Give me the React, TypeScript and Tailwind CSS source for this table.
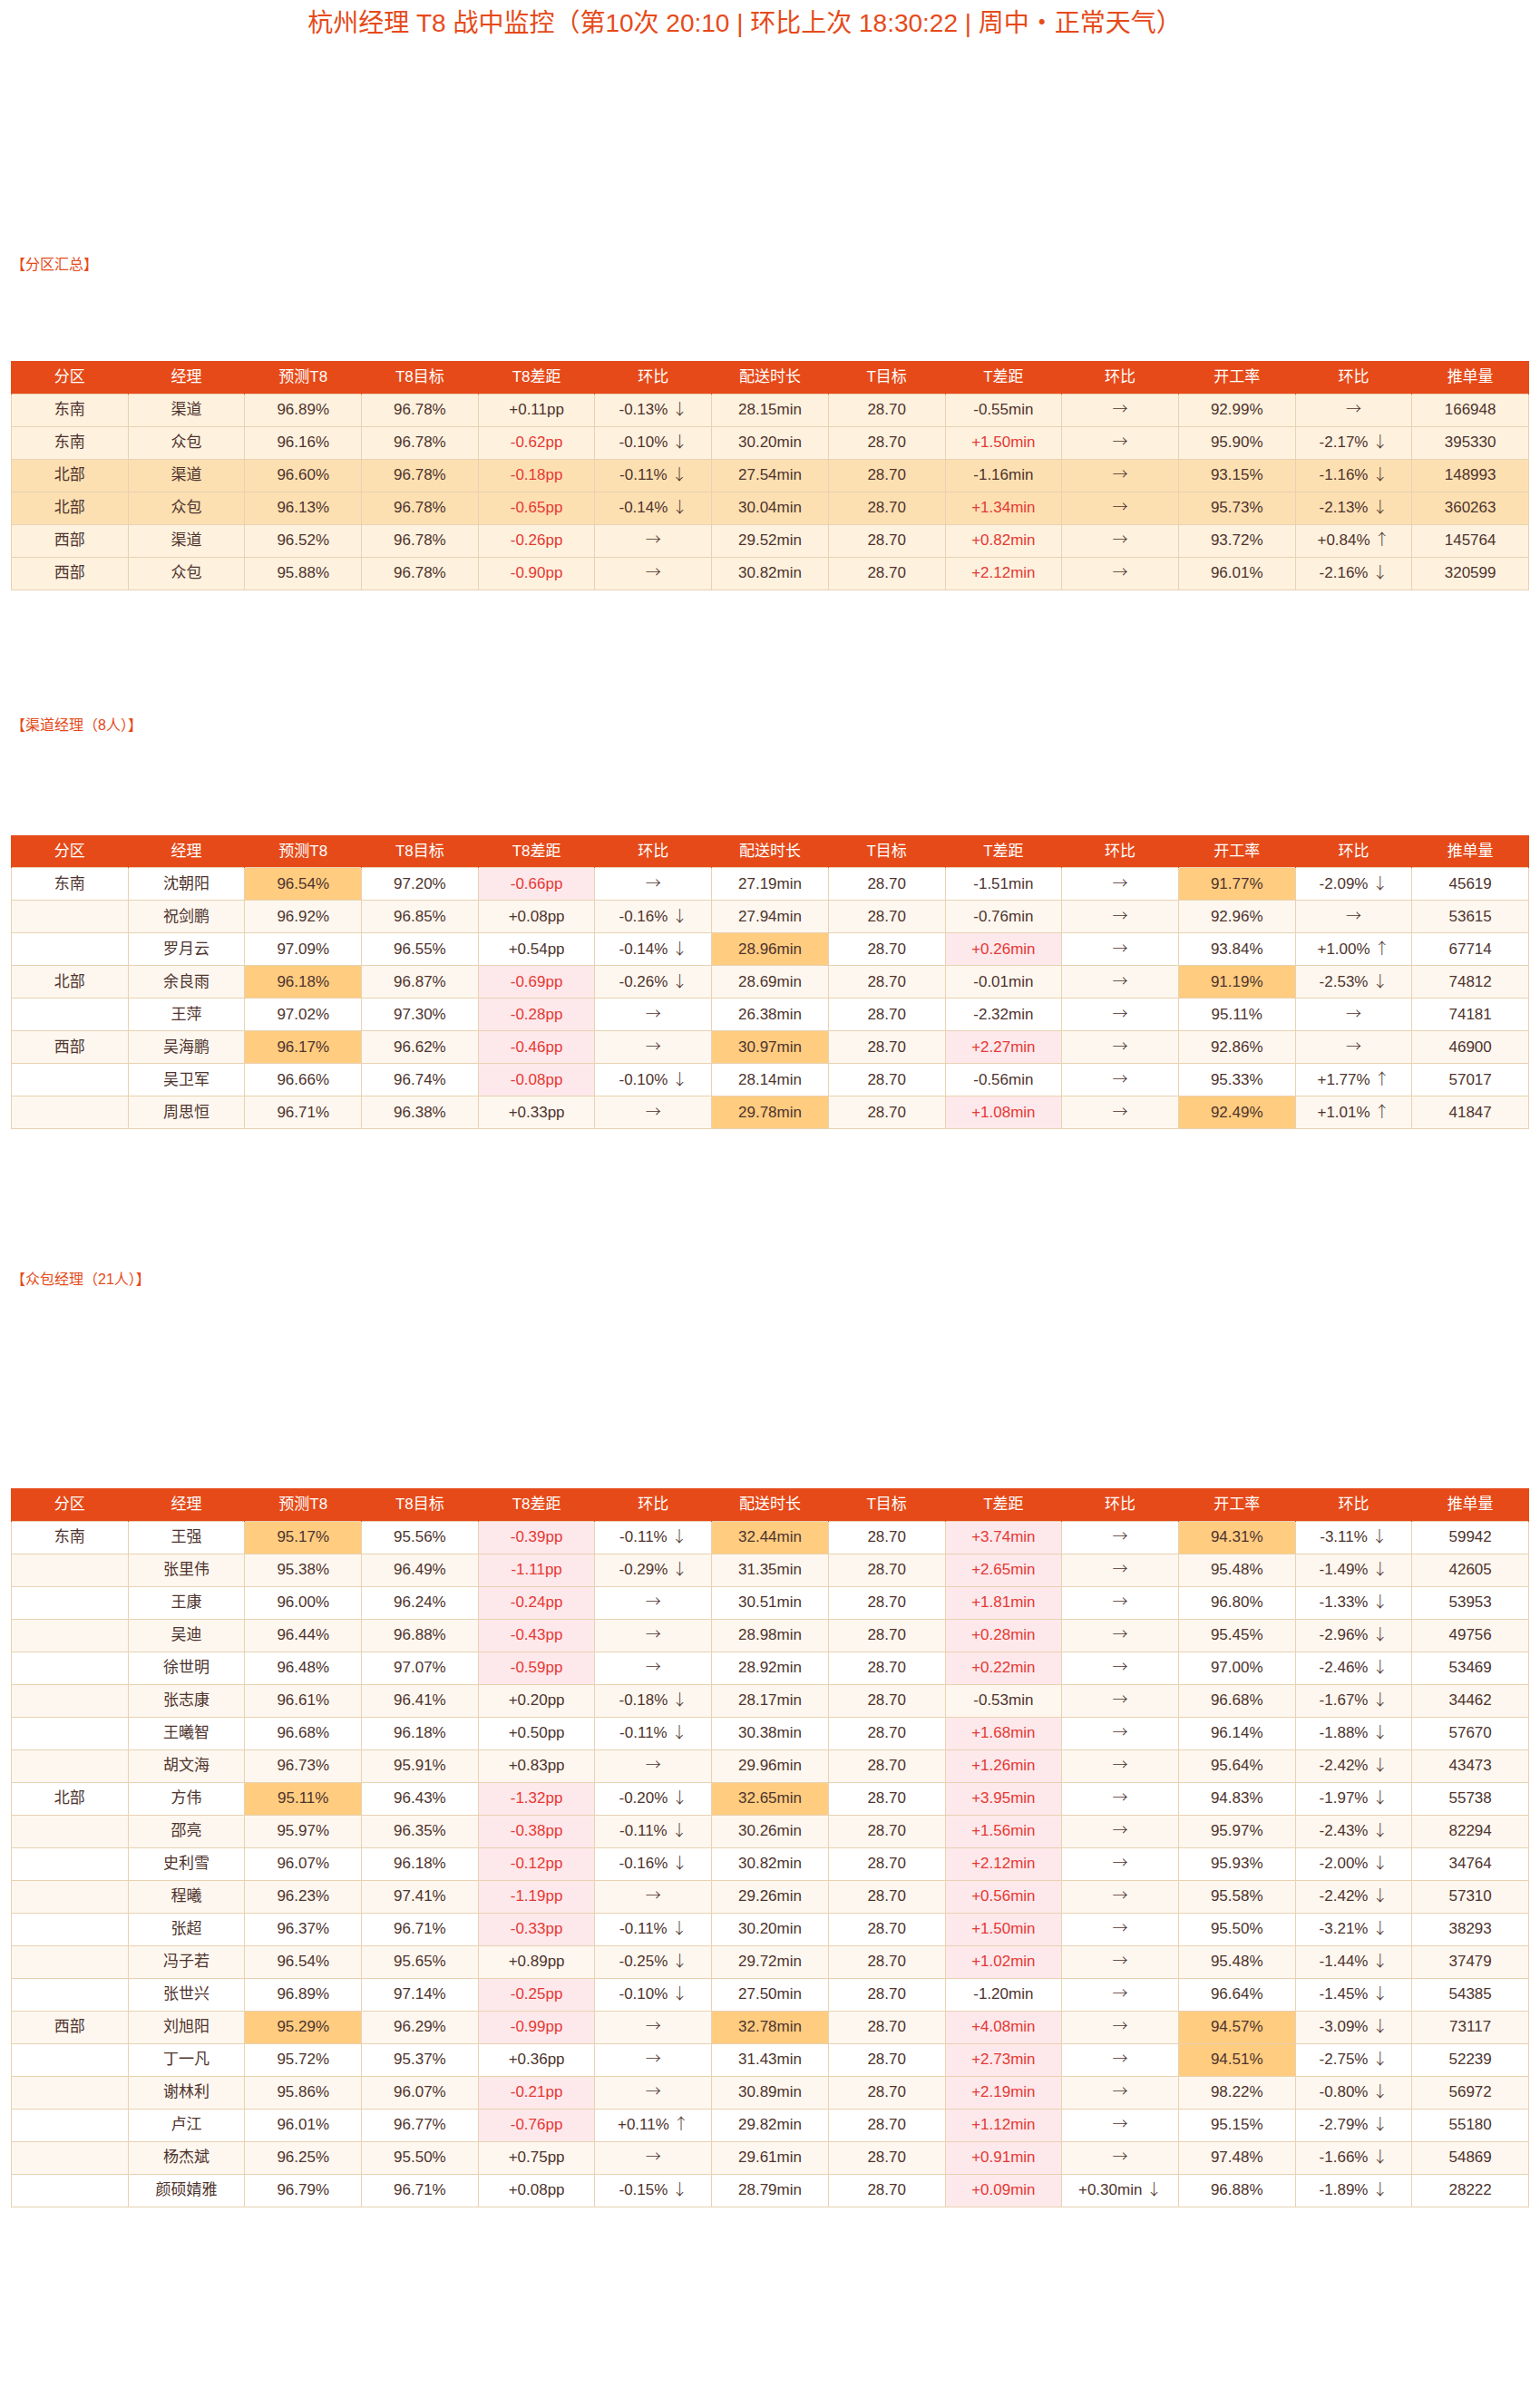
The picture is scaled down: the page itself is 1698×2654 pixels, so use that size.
import React from 'react';

const HEAD = ['分区', '经理', '预测T8', 'T8目标', 'T8差距', '环比', '配送时长', 'T目标', 'T差距', '环比', '开工率', '环比', '推单量'];

type Row = { cells: string[]; hl?: number[] };

const summary: Row[] = [
  { cells: ['东南', '渠道', '96.89%', '96.78%', '+0.11pp', '-0.13% ↓', '28.15min', '28.70', '-0.55min', '→', '92.99%', '→', '166948'] },
  { cells: ['东南', '众包', '96.16%', '96.78%', '-0.62pp', '-0.10% ↓', '30.20min', '28.70', '+1.50min', '→', '95.90%', '-2.17% ↓', '395330'] },
  { cells: ['北部', '渠道', '96.60%', '96.78%', '-0.18pp', '-0.11% ↓', '27.54min', '28.70', '-1.16min', '→', '93.15%', '-1.16% ↓', '148993'] },
  { cells: ['北部', '众包', '96.13%', '96.78%', '-0.65pp', '-0.14% ↓', '30.04min', '28.70', '+1.34min', '→', '95.73%', '-2.13% ↓', '360263'] },
  { cells: ['西部', '渠道', '96.52%', '96.78%', '-0.26pp', '→', '29.52min', '28.70', '+0.82min', '→', '93.72%', '+0.84% ↑', '145764'] },
  { cells: ['西部', '众包', '95.88%', '96.78%', '-0.90pp', '→', '30.82min', '28.70', '+2.12min', '→', '96.01%', '-2.16% ↓', '320599'] },
];

const channel: Row[] = [
  { cells: ['东南', '沈朝阳', '96.54%', '97.20%', '-0.66pp', '→', '27.19min', '28.70', '-1.51min', '→', '91.77%', '-2.09% ↓', '45619'], hl: [2, 10] },
  { cells: ['', '祝剑鹏', '96.92%', '96.85%', '+0.08pp', '-0.16% ↓', '27.94min', '28.70', '-0.76min', '→', '92.96%', '→', '53615'] },
  { cells: ['', '罗月云', '97.09%', '96.55%', '+0.54pp', '-0.14% ↓', '28.96min', '28.70', '+0.26min', '→', '93.84%', '+1.00% ↑', '67714'], hl: [6] },
  { cells: ['北部', '余良雨', '96.18%', '96.87%', '-0.69pp', '-0.26% ↓', '28.69min', '28.70', '-0.01min', '→', '91.19%', '-2.53% ↓', '74812'], hl: [2, 10] },
  { cells: ['', '王萍', '97.02%', '97.30%', '-0.28pp', '→', '26.38min', '28.70', '-2.32min', '→', '95.11%', '→', '74181'] },
  { cells: ['西部', '吴海鹏', '96.17%', '96.62%', '-0.46pp', '→', '30.97min', '28.70', '+2.27min', '→', '92.86%', '→', '46900'], hl: [2, 6] },
  { cells: ['', '吴卫军', '96.66%', '96.74%', '-0.08pp', '-0.10% ↓', '28.14min', '28.70', '-0.56min', '→', '95.33%', '+1.77% ↑', '57017'] },
  { cells: ['', '周思恒', '96.71%', '96.38%', '+0.33pp', '→', '29.78min', '28.70', '+1.08min', '→', '92.49%', '+1.01% ↑', '41847'], hl: [6, 10] },
];

const crowd: Row[] = [
  { cells: ['东南', '王强', '95.17%', '95.56%', '-0.39pp', '-0.11% ↓', '32.44min', '28.70', '+3.74min', '→', '94.31%', '-3.11% ↓', '59942'], hl: [2, 6, 10] },
  { cells: ['', '张里伟', '95.38%', '96.49%', '-1.11pp', '-0.29% ↓', '31.35min', '28.70', '+2.65min', '→', '95.48%', '-1.49% ↓', '42605'] },
  { cells: ['', '王康', '96.00%', '96.24%', '-0.24pp', '→', '30.51min', '28.70', '+1.81min', '→', '96.80%', '-1.33% ↓', '53953'] },
  { cells: ['', '吴迪', '96.44%', '96.88%', '-0.43pp', '→', '28.98min', '28.70', '+0.28min', '→', '95.45%', '-2.96% ↓', '49756'] },
  { cells: ['', '徐世明', '96.48%', '97.07%', '-0.59pp', '→', '28.92min', '28.70', '+0.22min', '→', '97.00%', '-2.46% ↓', '53469'] },
  { cells: ['', '张志康', '96.61%', '96.41%', '+0.20pp', '-0.18% ↓', '28.17min', '28.70', '-0.53min', '→', '96.68%', '-1.67% ↓', '34462'] },
  { cells: ['', '王曦智', '96.68%', '96.18%', '+0.50pp', '-0.11% ↓', '30.38min', '28.70', '+1.68min', '→', '96.14%', '-1.88% ↓', '57670'] },
  { cells: ['', '胡文海', '96.73%', '95.91%', '+0.83pp', '→', '29.96min', '28.70', '+1.26min', '→', '95.64%', '-2.42% ↓', '43473'] },
  { cells: ['北部', '方伟', '95.11%', '96.43%', '-1.32pp', '-0.20% ↓', '32.65min', '28.70', '+3.95min', '→', '94.83%', '-1.97% ↓', '55738'], hl: [2, 6] },
  { cells: ['', '邵亮', '95.97%', '96.35%', '-0.38pp', '-0.11% ↓', '30.26min', '28.70', '+1.56min', '→', '95.97%', '-2.43% ↓', '82294'] },
  { cells: ['', '史利雪', '96.07%', '96.18%', '-0.12pp', '-0.16% ↓', '30.82min', '28.70', '+2.12min', '→', '95.93%', '-2.00% ↓', '34764'] },
  { cells: ['', '程曦', '96.23%', '97.41%', '-1.19pp', '→', '29.26min', '28.70', '+0.56min', '→', '95.58%', '-2.42% ↓', '57310'] },
  { cells: ['', '张超', '96.37%', '96.71%', '-0.33pp', '-0.11% ↓', '30.20min', '28.70', '+1.50min', '→', '95.50%', '-3.21% ↓', '38293'] },
  { cells: ['', '冯子若', '96.54%', '95.65%', '+0.89pp', '-0.25% ↓', '29.72min', '28.70', '+1.02min', '→', '95.48%', '-1.44% ↓', '37479'] },
  { cells: ['', '张世兴', '96.89%', '97.14%', '-0.25pp', '-0.10% ↓', '27.50min', '28.70', '-1.20min', '→', '96.64%', '-1.45% ↓', '54385'] },
  { cells: ['西部', '刘旭阳', '95.29%', '96.29%', '-0.99pp', '→', '32.78min', '28.70', '+4.08min', '→', '94.57%', '-3.09% ↓', '73117'], hl: [2, 6, 10] },
  { cells: ['', '丁一凡', '95.72%', '95.37%', '+0.36pp', '→', '31.43min', '28.70', '+2.73min', '→', '94.51%', '-2.75% ↓', '52239'], hl: [10] },
  { cells: ['', '谢林利', '95.86%', '96.07%', '-0.21pp', '→', '30.89min', '28.70', '+2.19min', '→', '98.22%', '-0.80% ↓', '56972'] },
  { cells: ['', '卢江', '96.01%', '96.77%', '-0.76pp', '+0.11% ↑', '29.82min', '28.70', '+1.12min', '→', '95.15%', '-2.79% ↓', '55180'] },
  { cells: ['', '杨杰斌', '96.25%', '95.50%', '+0.75pp', '→', '29.61min', '28.70', '+0.91min', '→', '97.48%', '-1.66% ↓', '54869'] },
  { cells: ['', '颜硕婧雅', '96.79%', '96.71%', '+0.08pp', '-0.15% ↓', '28.79min', '28.70', '+0.09min', '+0.30min ↓', '96.88%', '-1.89% ↓', '28222'] },
];

// red = T8 below target or delivery time above target
const isBad = (i: number, v: string) => (i === 4 && v.startsWith('-')) || (i === 8 && v.startsWith('+'));

// arrows use the CJK face: full width, thin stroke
function Value({ v }: { v: string }) {
  const m = v.match(/^(.*?)\s*([→↑↓])$/);
  if (!m) return <>{v}</>;
  return (
    <>
      {m[1] && <span>{m[1]} </span>}
      <span className="font-['Noto_Sans_CJK_SC',sans-serif] font-light leading-none">{m[2]}</span>
    </>
  );
}

function DataTable({ rows, summaryMode }: { rows: Row[]; summaryMode?: boolean }) {
  return (
    <table className="w-full table-fixed border-collapse text-[17px] text-[#4e342e]">
      <thead>
        <tr className="h-[36px] bg-[#e64a19] text-white">
          {HEAD.map((h, i) => (
            <th key={i} className="font-normal text-center border-x border-[#e64a19]">{h}</th>
          ))}
        </tr>
      </thead>
      <tbody>
        {rows.map((r, ri) => {
          const rowBg = summaryMode
            ? ri === 2 || ri === 3 ? 'bg-[#fde0b2]' : 'bg-[#fef1de]'
            : ri % 2 === 0 ? 'bg-white' : 'bg-[#fef7ef]';
          return (
            <tr key={ri} className={`h-[36px] ${rowBg}`}>
              {r.cells.map((v, i) => {
                const bad = isBad(i, v);
                const hl = r.hl?.includes(i);
                let cls = 'border border-[#e8d2b2] text-center whitespace-nowrap';
                if (hl) cls += ' bg-[#ffcc80]';
                else if (bad && !summaryMode) cls += ' bg-[#fde8eb]';
                if (bad) cls += ' text-[#e53935]';
                return <td key={i} className={cls}><Value v={v} /></td>;
              })}
            </tr>
          );
        })}
      </tbody>
    </table>
  );
}

function Label({ children }: { children: React.ReactNode }) {
  return <div className="h-6 leading-6 px-3 text-[16px] text-[#e64a19]">{children}</div>;
}

export default function App() {
  return (
    <div className="w-[1698px] min-h-[2654px] bg-white font-['Liberation_Sans','Noto_Sans_CJK_SC',sans-serif]">
      <div className="pt-2 h-11 pr-[56px] text-center text-[28px] leading-9 text-[#e64a19]">
        杭州经理 T8 战中监控（第10次 20:10 | 环比上次 18:30:22 | 周中・正常天气）
      </div>

      <div className="mt-[236px]">
        <Label>【分区汇总】</Label>
      </div>
      <div className="mx-3 mt-[94px]">
        <DataTable rows={summary} summaryMode />
      </div>

      <div className="mt-[137px]">
        <Label>【渠道经理（8人）】</Label>
      </div>
      <div className="mx-3 mt-[109px]">
        <DataTable rows={channel} />
      </div>

      <div className="mt-[154px]">
        <Label>【众包经理（21人）】</Label>
      </div>
      <div className="mx-3 mt-[218px]">
        <DataTable rows={crowd} />
      </div>
    </div>
  );
}
